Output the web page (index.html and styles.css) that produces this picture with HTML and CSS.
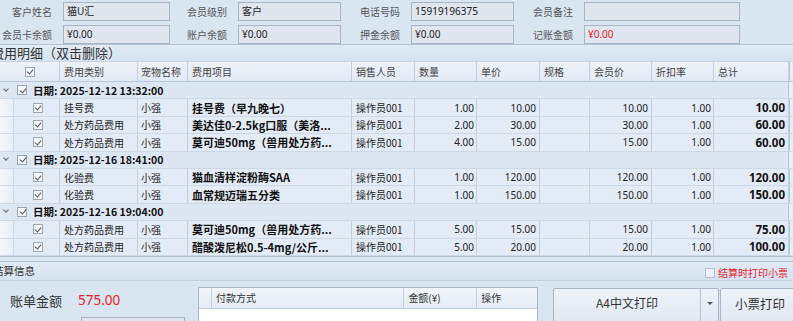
FILE: index.html
```html
<!DOCTYPE html>
<html lang="zh">
<head>
<meta charset="utf-8">
<link rel="stylesheet" href="styles.css">
</head>
<body>
<div class="page">
  <div class="form">
    <div class="frow">
      <span class="lbl w63">客户姓名</span><span class="inp w107">猫U汇</span>
      <span class="lbl w68">会员级别</span><span class="inp w103">客户</span>
      <span class="lbl w70">电话号码</span><span class="inp w103">15919196375</span>
      <span class="lbl w70">会员备注</span><span class="inp w156"></span>
    </div>
    <div class="frow">
      <span class="lbl w63">会员卡余额</span><span class="inp w107">¥0.00</span>
      <span class="lbl w68">账户余额</span><span class="inp w103">¥0.00</span>
      <span class="lbl w70">押金余额</span><span class="inp w103">¥0.00</span>
      <span class="lbl w70">记账金额</span><span class="inp w156 red">¥0.00</span>
    </div>
  </div>
  <div class="sect">费用明细（双击删除）</div>
  <div class="grid">
    <div class="row head">
      <div class="c c0"><span class="cb hcb"></span></div>
      <div class="c c1">费用类别</div>
      <div class="c c2">宠物名称</div>
      <div class="c c3">费用项目</div>
      <div class="c c4">销售人员</div>
      <div class="c c5">数量</div>
      <div class="c c6">单价</div>
      <div class="c c7">规格</div>
      <div class="c c8">会员价</div>
      <div class="c c9">折扣率</div>
      <div class="c c10">总计</div>
      <div class="c sb"></div>
    </div>

    <div class="row group"><span class="chev"></span><span class="cb gcb"></span><span class="gt">日期: 2025-12-12 13:32:00</span></div>
    <div class="row data">
      <div class="c c0"><span class="ind"></span><span class="cb dcb"></span></div>
      <div class="c c1">挂号费</div><div class="c c2">小强</div>
      <div class="c c3 item">挂号费（早九晚七）</div><div class="c c4">操作员001</div>
      <div class="c c5 num">1.00</div><div class="c c6 num">10.00</div><div class="c c7"></div>
      <div class="c c8 num">10.00</div><div class="c c9 num">1.00</div><div class="c c10 num tot">10.00</div><div class="c sb"></div>
    </div>
    <div class="row data">
      <div class="c c0"><span class="ind"></span><span class="cb dcb"></span></div>
      <div class="c c1">处方药品费用</div><div class="c c2">小强</div>
      <div class="c c3 item">美达佳0-2.5kg口服（美洛...</div><div class="c c4">操作员001</div>
      <div class="c c5 num">2.00</div><div class="c c6 num">30.00</div><div class="c c7"></div>
      <div class="c c8 num">30.00</div><div class="c c9 num">1.00</div><div class="c c10 num tot">60.00</div><div class="c sb"></div>
    </div>
    <div class="row data">
      <div class="c c0"><span class="ind"></span><span class="cb dcb"></span></div>
      <div class="c c1">处方药品费用</div><div class="c c2">小强</div>
      <div class="c c3 item">莫可迪50mg（兽用处方药...</div><div class="c c4">操作员001</div>
      <div class="c c5 num">4.00</div><div class="c c6 num">15.00</div><div class="c c7"></div>
      <div class="c c8 num">15.00</div><div class="c c9 num">1.00</div><div class="c c10 num tot">60.00</div><div class="c sb"></div>
    </div>

    <div class="row group"><span class="chev"></span><span class="cb gcb"></span><span class="gt">日期: 2025-12-16 18:41:00</span></div>
    <div class="row data">
      <div class="c c0"><span class="ind"></span><span class="cb dcb"></span></div>
      <div class="c c1">化验费</div><div class="c c2">小强</div>
      <div class="c c3 item">猫血清样淀粉酶SAA</div><div class="c c4">操作员001</div>
      <div class="c c5 num">1.00</div><div class="c c6 num">120.00</div><div class="c c7"></div>
      <div class="c c8 num">120.00</div><div class="c c9 num">1.00</div><div class="c c10 num tot">120.00</div><div class="c sb"></div>
    </div>
    <div class="row data">
      <div class="c c0"><span class="ind"></span><span class="cb dcb"></span></div>
      <div class="c c1">化验费</div><div class="c c2">小强</div>
      <div class="c c3 item">血常规迈瑞五分类</div><div class="c c4">操作员001</div>
      <div class="c c5 num">1.00</div><div class="c c6 num">150.00</div><div class="c c7"></div>
      <div class="c c8 num">150.00</div><div class="c c9 num">1.00</div><div class="c c10 num tot">150.00</div><div class="c sb"></div>
    </div>

    <div class="row group"><span class="chev"></span><span class="cb gcb"></span><span class="gt">日期: 2025-12-16 19:04:00</span></div>
    <div class="row data">
      <div class="c c0"><span class="ind"></span><span class="cb dcb"></span></div>
      <div class="c c1">处方药品费用</div><div class="c c2">小强</div>
      <div class="c c3 item">莫可迪50mg（兽用处方药...</div><div class="c c4">操作员001</div>
      <div class="c c5 num">5.00</div><div class="c c6 num">15.00</div><div class="c c7"></div>
      <div class="c c8 num">15.00</div><div class="c c9 num">1.00</div><div class="c c10 num tot">75.00</div><div class="c sb"></div>
    </div>
    <div class="row data">
      <div class="c c0"><span class="ind"></span><span class="cb dcb"></span></div>
      <div class="c c1">处方药品费用</div><div class="c c2">小强</div>
      <div class="c c3 item">醋酸泼尼松0.5-4mg/公斤...</div><div class="c c4">操作员001</div>
      <div class="c c5 num">5.00</div><div class="c c6 num">20.00</div><div class="c c7"></div>
      <div class="c c8 num">20.00</div><div class="c c9 num">1.00</div><div class="c c10 num tot">100.00</div><div class="c sb"></div>
    </div>
  </div>
  <div class="gridfoot"></div>
  <div class="sect2">
    <span class="s2t">结算信息</span>
    <span class="printopt"><span class="cb ocb"></span>结算时打印小票</span>
  </div>
  <div class="bottom">
    <div class="bill">
      <span class="billl">账单金额</span><span class="billv">575.00</span>
      <span class="billbox"></span>
    </div>
    <div class="pay">
      <div class="payh">
        <span class="p0"></span><span class="p1">付款方式</span><span class="p2">金额(¥)</span><span class="p3">操作</span>
      </div>
    </div>
    <div class="btns">
      <div class="btn a4"><span class="a4t">A4中文打印</span><span class="dd"><span class="tri"></span></span></div>
      <div class="btn small">小票打印</div>
    </div>
  </div>
</div>
</body>
</html>
```
FILE: styles.css
```css
* { box-sizing: border-box; }
html, body { margin: 0; padding: 0; }
body {
  width: 793px; height: 321px; overflow: hidden;
  background: #dae5f2;
  font-family: "Noto Sans CJK SC", "Noto Sans", sans-serif;
  font-size: 10px; color: #222;
}
.page { width: 793px; height: 321px; overflow: hidden; }

.form { padding-top: 2px; height: 45px; border-bottom: 1px solid #b3c3d6; }
.frow { display: flex; align-items: center; height: 19px; margin-bottom: 4px; }
.lbl { flex: none; text-align: right; padding-right: 11px; color: #555; font-size: 10px; line-height: 19px; white-space: nowrap; }
.w63 { width: 63px; } .w68 { width: 68px; } .w70 { width: 70px; }
.inp { flex: none; height: 19px; border: 1px solid #aab4c1; background: #dfe6ef; padding-left: 3px; line-height: 17px; font-family: "Noto Sans", "Noto Sans CJK SC", sans-serif; font-size: 10px; color: #222; }
.w107 { width: 107px; } .w103 { width: 103px; } .w156 { width: 156px; }
.red { color: #e8202a; }

.sect { height: 16px; line-height: 16px; font-size: 13px; color: #333; text-indent: -9px; white-space: nowrap; overflow: hidden;
  background: linear-gradient(#e2ebf6, #d5e2f1); }

.grid { background: #dde7f3; }
.row { display: flex; width: 793px; }
.c { flex: none; height: 100%; border-right: 1px solid #c3d0e0; padding: 0 4px; white-space: nowrap; overflow: hidden; display: flex; align-items: center; }
.c0 { width: 60px; position: relative; justify-content: center; padding: 0; }
.c1 { width: 78px; } .c2 { width: 50px; } .c3 { width: 164px; } .c4 { width: 63px; }
.c5 { width: 62px; } .c6 { width: 63px; } .c7 { width: 50px; } .c8 { width: 62px; }
.c9 { width: 62px; } .c10 { width: 75px; }
.sb { width: 4px; padding: 0; border-right: none; border-left: 1px solid #b9c6d6; background: #e8eef6; }

.head { height: 21px; background: linear-gradient(#eef3f9, #e1e9f4); border-top: 1px solid #c8d4e3; border-bottom: 1px solid #b7c6d8; color: #444; font-size: 10px; }
.head .c { border-right-color: #c3cfde; }

.data { height: 17.4px; background: #e3ebf6; border-bottom: 1px solid #cdd8e6; }
.data .c { font-size: 10px; color: #222; }
.num { justify-content: flex-end; font-family: "Noto Sans", sans-serif; padding-right: 2px; }
.c6.num, .c8.num, .c10.num { padding-right: 3px; }
.data .item { font-weight: bold; font-size: 11px; color: #111; padding-left: 4px; }
.data .tot { font-weight: bold; font-size: 11.5px; color: #111; }
.c1, .c2, .c4 { padding-left: 4px; }
.c2 { padding-left: 3px; }

.ind { position: absolute; left: 0; top: 0; bottom: 0; width: 14px; background: linear-gradient(90deg, #f4f6f9, #e8eef6); border-right: 1px solid #d0dae7; }

.group { height: 17.4px; background: #dde7f3; border-bottom: 1px solid #cdd8e6; align-items: center; position: relative; }
.group::after { content: ""; position: absolute; right: 0; top: 0; bottom: 0; width: 4px; border-left: 1px solid #b9c6d6; background: #e8eef6; }
.chev { width: 4px; height: 4px; border-right: 1.2px solid #666; border-bottom: 1.2px solid #666; transform: rotate(45deg); margin: -3px 0 0 4px; }
.gt { font-weight: bold; font-size: 10.5px; color: #111; margin-left: 6px; font-family: "Noto Sans CJK SC", sans-serif; }

.cb { display: inline-block; width: 10px; height: 10px; border: 1px solid #9aa7b6; background: #f4f7fb; position: relative; flex: none; }
.cb::after { content: ""; position: absolute; left: 2.5px; top: 0.5px; width: 3px; height: 5px; border-right: 1.2px solid #555; border-bottom: 1.2px solid #555; transform: rotate(40deg); }
.dcb { position: relative; left: 8px; }
.gcb { margin-left: 9px; }
.ocb::after { display: none; }
.ocb { border-color: #b5bfcc; background: #eef2f7; margin-right: 3px; }

.gridfoot { height: 6px; background: #e0e8f3; border-top: 1px solid #aebfd3; border-bottom: 1px solid #aebfd3; }

.sect2 { height: 19px; display: flex; align-items: center; justify-content: space-between; background: linear-gradient(#e1eaf5, #d6e2f0); border-bottom: 1px solid #c0cfe0; }
.s2t { font-size: 10.5px; color: #333; margin-left: -7px; }
.printopt { color: #e8202a; font-size: 10px; display: flex; align-items: center; margin-right: 5px; margin-top: 4px; }

.bottom { display: flex; height: 40px; }
.bill { flex: none; width: 198px; position: relative; display: flex; align-items: flex-start; padding-top: 10px; }
.billl { font-size: 13px; color: #333; margin-left: 10px; }
.billv { font-size: 13.5px; color: #e8202a; margin-left: 16px; font-family: "Noto Sans", sans-serif; }
.billbox { position: absolute; left: 81px; top: 36px; width: 104px; height: 10px; border: 1px solid #aab4c1; background: #dfe6ef; }
.pay { flex: none; width: 340px; margin-top: 6px; border: 1px solid #aab8c9; border-bottom: none; background: #fff; }
.payh { display: flex; height: 21px; background: linear-gradient(#f2f6fb, #e4ebf4); border-bottom: 1px solid #c3cfde; font-size: 10px; color: #333; }
.payh span { border-right: 1px solid #c3cfde; display: flex; align-items: center; padding-left: 4px; }
.p0 { width: 13px; } .p1 { width: 193px; } .p2 { width: 73px; } .p3 { width: 60px; border-right: none !important; }
.btns { flex: none; display: flex; margin-left: 15px; margin-top: 7px; }
.btn { flex: none; height: 40px; border: 1px solid #a9b6c6; border-radius: 2px; background: linear-gradient(#edf2f8, #dfe7f1); display: flex; font-size: 12px; color: #333; }
.a4 { width: 166px; }
.a4t { width: 147px; display: flex; justify-content: center; padding-top: 5px; }
.dd { width: 18px; border-left: 1px solid #b4c0cf; display: flex; justify-content: center; padding-top: 13px; }
.tri { width: 0; height: 0; border-left: 3px solid transparent; border-right: 3px solid transparent; border-top: 3px solid #555; }
.small { width: 80px; margin-left: 1px; justify-content: center; padding-top: 5px; font-size: 12.5px; }
```
